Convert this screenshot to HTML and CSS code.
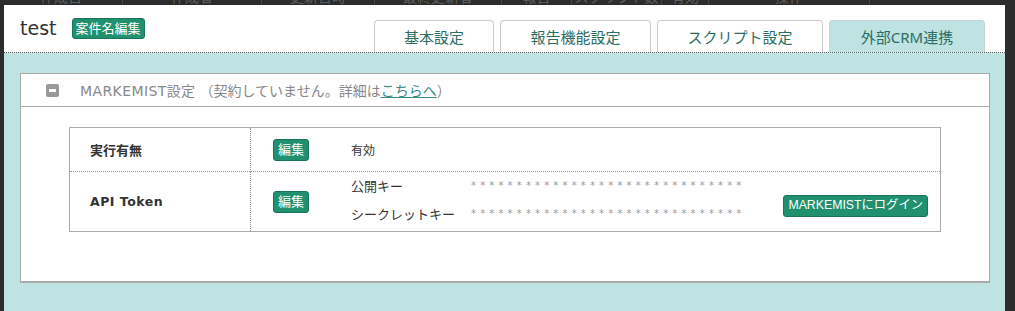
FILE: index.html
```html
<!DOCTYPE html>
<html lang="ja">

<head>
  <meta charset="UTF-8">
  <meta name="viewport" content="width=device-width, initial-scale=1.0">
  <title>外部CRM連携</title>
  <link rel="stylesheet" href="styles.css">
</head>

<body>
  <!-- 背後の一覧ヘッダー（オーバーレイで隠れている） -->
  <div class="page-head">
    <span style="width: 123px">作成日</span>
    <span style="width: 139px">作成者</span>
    <span style="width: 113px">更新日時</span>
    <span style="width: 127px">最終更新者</span>
    <span style="width: 70px">報告</span>
    <span style="width: 90px">スクリプト数</span>
    <span style="width: 47px">有効</span>
    <span style="width: 161px">操作</span>
  </div>

  <div class="modal">
    <div class="modal-head">
      <div class="title">
        <h1>test</h1>
        <span class="btn">案件名編集</span>
      </div>
      <ul class="tabs">
        <li>基本設定</li>
        <li>報告機能設定</li>
        <li>スクリプト設定</li>
        <li class="tab-selected">外部CRM連携</li>
      </ul>
    </div>

    <div class="modal-body">
      <div class="box">
        <div class="box-head">
          <span class="toggle"></span>
          <span class="box-title">MARKEMIST設定</span>
          <span class="box-note">（契約していません。詳細は<a href="#">こちらへ</a>）</span>
        </div>
        <div class="box-body">
          <table class="settings">
            <tr class="row-active">
              <th>実行有無</th>
              <td>
                <div class="cell">
                  <div class="cell-btn"><span class="btn">編集</span></div>
                  <div class="cell-value">有効</div>
                </div>
              </td>
            </tr>
            <tr class="row-token">
              <th class="latin">API Token</th>
              <td>
                <div class="cell">
                  <div class="cell-btn"><span class="btn">編集</span></div>
                  <div class="keys">
                    <div class="key"><span class="key-name">公開キー</span><span class="mask">******************************</span></div>
                    <div class="key"><span class="key-name">シークレットキー</span><span class="mask">******************************</span></div>
                  </div>
                  <span class="btn btn-login">MARKEMISTにログイン</span>
                </div>
              </td>
            </tr>
          </table>
        </div>
      </div>
    </div>
  </div>
</body>

</html>
```

FILE: styles.css
```css
* {
  margin: 0;
  padding: 0;
  box-sizing: border-box;
}

li {
  list-style: none;
}

body {
  background-color: #2c2c2c;
  font-family: "DejaVu Sans", "Noto Sans CJK JP", sans-serif;
  color: #333;
  overflow: hidden;
}

.page-head {
  display: flex;
  height: 5px;
  overflow: hidden;
}

.page-head span {
  flex: none;
  border-right: 1px solid #444;
  color: #5e5e5e;
  font-size: 14px;
  line-height: 16px;
  margin-top: -11px;
  height: 20px;
  text-align: center;
}

.modal {
  margin: 0 10px 0 4px;
  height: 306px;
  background-color: #bfe2e2;
}

.modal-head {
  display: flex;
  justify-content: space-between;
  height: 48px;
  background-color: #fff;
  border-bottom: 1px dotted #555;
  padding: 0 20px 0 16px;
}

.title {
  display: flex;
  align-items: center;
  align-self: flex-start;
  margin-top: 12px;
}

.title h1 {
  font-size: 19px;
  font-weight: normal;
  color: #333;
  margin-right: 15px;
  line-height: 22px;
}

.btn {
  display: inline-block;
  background-color: #21906f;
  border: 1px solid #18745a;
  border-radius: 3px;
  color: #fff;
  font-family: "Liberation Sans", "Noto Sans CJK JP", sans-serif;
  font-size: 13px;
  line-height: 19px;
  height: 21px;
  padding: 0 3px;
  white-space: nowrap;
}

.tabs {
  display: flex;
  align-self: flex-end;
  gap: 6px;
}

.tabs li {
  height: 32px;
  border: 1px solid #ccc;
  border-bottom: none;
  border-radius: 4px 4px 0 0;
  font-family: "Noto Sans", "Noto Sans CJK JP", sans-serif;
  font-size: 15px;
  line-height: 33px;
  color: #2d6d64;
  background-color: #fff;
  text-align: center;
  white-space: nowrap;
}

.tabs li:nth-child(1) { width: 120px; }
.tabs li:nth-child(2) { width: 151px; }
.tabs li:nth-child(3) { width: 166px; }
.tabs li:nth-child(4) { width: 156px; }

.tabs .tab-selected {
  background-color: #bfe2e2;
  border-color: #c4d6d6;
}

.modal-body {
  padding: 20px 15px 0 16px;
}

.box {
  background-color: #fff;
  border: 1px solid #aaa;
  border-bottom-width: 2px;
}

.box-head {
  display: flex;
  align-items: center;
  height: 33px;
  border-bottom: 1px solid #aaa;
  padding-left: 25px;
  color: #888;
  font-size: 14px;
}

.toggle {
  position: relative;
  width: 13px;
  height: 13px;
  background-color: #999;
  border-radius: 2px;
  margin-right: 21px;
}

.toggle::after {
  content: "";
  position: absolute;
  left: 3px;
  top: 5px;
  width: 7px;
  height: 3px;
  background-color: #fff;
}

.box-title {
  letter-spacing: 0.4px;
  margin-right: 4px;
}

.box-note a {
  color: #3a8a86;
}

.box-body {
  padding: 20px 48px 49px;
}

.settings {
  width: 100%;
  border-collapse: collapse;
  border: 1px solid #aaa;
  font-size: 13px;
}

.settings th {
  width: 181px;
  text-align: left;
  padding-left: 20px;
  border-right: 1px dotted #999;
  font-family: "Noto Sans CJK JP", sans-serif;
}

.settings th.latin {
  font-family: "DejaVu Sans", sans-serif;
  font-size: 12.5px;
  letter-spacing: 0.5px;
}

.row-active {
  height: 44px;
  border-bottom: 1px dotted #999;
}

.row-token {
  height: 60px;
}

.cell {
  display: flex;
  align-items: center;
  padding: 0 12px 0 22px;
}

.cell-btn {
  width: 78px;
}

.cell-btn .btn {
  width: 36px;
  height: 22px;
  text-align: center;
}

.cell-value {
  font-family: "Noto Sans CJK JP", sans-serif;
  font-size: 12px;
}

.keys {
  flex: 1;
  display: flex;
  flex-direction: column;
  gap: 8px;
  margin-top: -4px;
}

.key {
  display: flex;
  align-items: center;
  height: 20px;
  font-family: "Noto Sans CJK JP", sans-serif;
}

.key-name {
  width: 120px;
}

.mask {
  color: #999;
  font-family: "DejaVu Sans", sans-serif;
  font-size: 10px;
  letter-spacing: 4.15px;
}

.btn-login {
  height: 22px;
  padding: 0 4px;
  margin-top: 8px;
  font-size: 12.3px;
}
```
